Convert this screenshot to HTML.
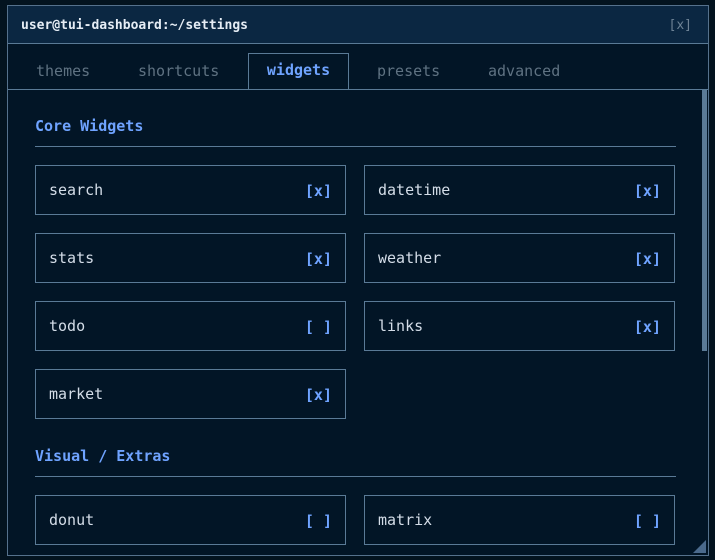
<!DOCTYPE html>
<html><head><style>
*{margin:0;padding:0;box-sizing:border-box}
body{width:715px;height:560px;background:#03131f;overflow:hidden;position:relative;font-family:"DejaVu Sans Mono","Liberation Mono",monospace;color:#d4dde8}
.win{position:absolute;left:7px;top:5px;width:702px;height:551px;border:1px solid #55718c;background:#021526}
.title{position:absolute;left:0;top:0;width:700px;height:38px;background:#0b2742;border-bottom:1px solid #5a7a96}
.title b{position:absolute;left:13px;top:12px;font-size:13px;color:#e6edf5}
.title .x{position:absolute;right:16px;top:12px;font-size:13px;color:#6d8295}
.tab{position:absolute;top:56px;font-size:15px;color:#5f7282}
.active{position:absolute;left:240px;top:47px;width:101px;height:37px;border:1px solid #5a7a96;border-bottom:none;background:#021526;color:#6fa3ff;font-weight:bold;font-size:15px;text-align:center;padding-top:7px}
.tline{position:absolute;left:0;top:83px;width:700px;height:1px;background:#5a7a96}
.h{position:absolute;left:27px;font-size:15px;font-weight:bold;color:#6fa3ff}
.hl{position:absolute;left:27px;width:641px;height:1px;background:#5a7a96}
.card{position:absolute;width:311px;height:50px;border:1px solid #5a7a96;font-size:15px}
.card span{position:absolute;left:13px;top:15px}
.card i{position:absolute;right:13px;top:16px;font-style:normal;font-weight:bold;color:#6fa3ff}
.sb{position:absolute;left:694px;top:84px;width:5px;height:261px;background:#5a7a96}
.grip{position:absolute;right:2px;bottom:2px;width:0;height:0;border-left:13px solid transparent;border-bottom:13px solid #4b6a8c}
</style></head><body>
<div class="win">
<div class="title"><b>user@tui-dashboard:~/settings</b><span class="x">[x]</span></div>
<div class="tab" style="left:28px">themes</div>
<div class="tab" style="left:130px">shortcuts</div>
<div class="active">widgets</div>
<div class="tab" style="left:369px">presets</div>
<div class="tab" style="left:480px">advanced</div>
<div class="tline"></div>
<div class="h" style="top:111px">Core Widgets</div>
<div class="hl" style="top:140px"></div>
<div class="card" style="left:27px;top:159px"><span>search</span><i>[x]</i></div>
<div class="card" style="left:356px;top:159px"><span>datetime</span><i>[x]</i></div>
<div class="card" style="left:27px;top:227px"><span>stats</span><i>[x]</i></div>
<div class="card" style="left:356px;top:227px"><span>weather</span><i>[x]</i></div>
<div class="card" style="left:27px;top:295px"><span>todo</span><i>[ ]</i></div>
<div class="card" style="left:356px;top:295px"><span>links</span><i>[x]</i></div>
<div class="card" style="left:27px;top:363px"><span>market</span><i>[x]</i></div>
<div class="h" style="top:441px">Visual / Extras</div>
<div class="hl" style="top:470px"></div>
<div class="card" style="left:27px;top:489px"><span>donut</span><i>[ ]</i></div>
<div class="card" style="left:356px;top:489px"><span>matrix</span><i>[ ]</i></div>
<div class="sb"></div>
<div class="grip"></div>
</div>
</body></html>
